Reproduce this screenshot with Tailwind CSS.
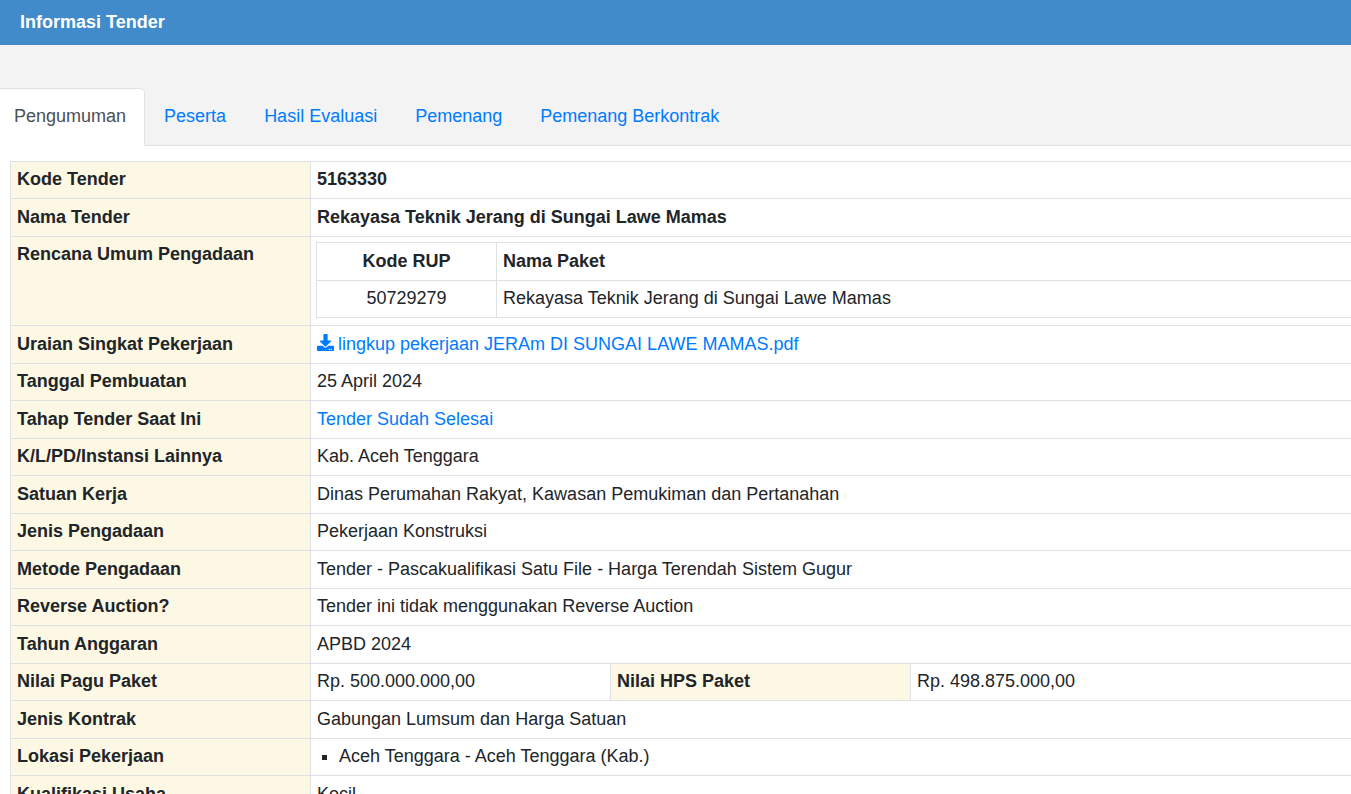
<!DOCTYPE html>
<html lang="id">
<head>
<meta charset="utf-8">
<title>Informasi Tender</title>
<meta name="viewport" content="width=device-width, initial-scale=1">
<script src="https://cdn.jsdelivr.net/npm/@tailwindcss/browser@4"></script>
</head>
<body class="min-h-screen bg-white font-['Liberation_Sans',Arial,sans-serif] text-[18px] leading-[26px] text-[#212529]">
<header class="flex h-[45px] items-center bg-[#428bca] px-5 pb-[2px]">
  <h1 class="font-bold text-white">Informasi Tender</h1>
</header>
<nav class="border-b border-[#dee2e6] bg-[#f3f3f3] pt-[43px]">
  <ul class="-mb-px flex text-[#007bff]">
    <li><a href="#pengumuman" aria-current="page" class="block rounded-tr-[5px] border border-l-0 border-[#dee2e6] border-b-white bg-white pt-[14px] pr-[18px] pb-4 pl-[14px] text-[#495057]">Pengumuman</a></li>
    <li><a href="#peserta" class="block border border-transparent px-[18px] pt-[14px] pb-4">Peserta</a></li>
    <li><a href="#evaluasi" class="block border border-transparent px-[18px] pt-[14px] pb-4">Hasil Evaluasi</a></li>
    <li><a href="#pemenang" class="block border border-transparent px-[18px] pt-[14px] pb-4">Pemenang</a></li>
    <li><a href="#berkontrak" class="block border border-transparent px-[18px] pt-[14px] pb-4">Pemenang Berkontrak</a></li>
  </ul>
</nav>
<main id="pengumuman" class="overflow-hidden pt-[15px] pl-[10px]">
  <table class="w-[calc(100%+10px)] table-fixed border-collapse text-left [&_td]:border [&_td]:border-[#dee2e6] [&_td]:px-[6px] [&_td]:pb-[2px] [&_th]:border [&_th]:border-[#dee2e6] [&_th]:px-[6px] [&_th]:pb-[2px] [&_tr]:odd:h-[37px] [&_tr]:even:h-[38px]">
    <colgroup><col class="w-[300px]"><col class="w-[300px]"><col class="w-[300px]"><col></colgroup>
    <tbody>
      <tr><th scope="row" class="bg-[#fcf8e3]">Kode Tender</th><td colspan="3" class="font-bold">5163330</td></tr>
      <tr><th scope="row" class="bg-[#fcf8e3]">Nama Tender</th><td colspan="3" class="font-bold">Rekayasa Teknik Jerang di Sungai Lawe Mamas</td></tr>
      <tr>
        <th scope="row" class="bg-[#fcf8e3] pt-1 align-top">Rencana Umum Pengadaan</th>
        <td colspan="3" class="px-[5px]! pt-[5px]! pb-[7px]!">
          <table class="w-full table-fixed border-collapse">
            <colgroup><col class="w-[180px]"><col></colgroup>
            <thead><tr class="h-[38px]!"><th scope="col" class="text-center">Kode RUP</th><th scope="col">Nama Paket</th></tr></thead>
            <tbody><tr><td class="text-center">50729279</td><td>Rekayasa Teknik Jerang di Sungai Lawe Mamas</td></tr></tbody>
          </table>
        </td>
      </tr>
      <tr><th scope="row" class="bg-[#fcf8e3]">Uraian Singkat Pekerjaan</th><td colspan="3"><a href="#unduh" class="flex items-center gap-1 text-[#007bff]"><svg class="mb-[2px] size-[17px]" viewBox="0 0 512 512" fill="#007bff" aria-hidden="true"><path d="M216 0h80c13.3 0 24 10.700 24 24v168h87.700c17.800 0 26.700 21.500 14.100 34.100L269.700 378.300c-7.500 7.500-19.800 7.500-27.300 0L90.100 226.100c-12.600-12.600-3.700-34.100 14.100-34.100H192V24c0-13.300 10.700-24 24-24zm296 376v112c0 13.300-10.700 24-24 24H24c-13.300 0-24-10.700-24-24V376c0-13.300 10.700-24 24-24h146.700l49 49c20.100 20.100 52.500 20.100 72.600 0l49-49H488c13.300 0 24 10.700 24 24zm-124 88c0-11-9-20-20-20s-20 9-20 20 9 20 20 20 20-9 20-20zm64 0c0-11-9-20-20-20s-20 9-20 20 9 20 20 20 20-9 20-20z"/></svg>lingkup pekerjaan JERAm DI SUNGAI LAWE MAMAS.pdf</a></td></tr>
      <tr><th scope="row" class="bg-[#fcf8e3]">Tanggal Pembuatan</th><td colspan="3">25 April 2024</td></tr>
      <tr><th scope="row" class="bg-[#fcf8e3]">Tahap Tender Saat Ini</th><td colspan="3"><a href="#tahap" class="text-[#007bff]">Tender Sudah Selesai</a></td></tr>
      <tr><th scope="row" class="bg-[#fcf8e3]">K/L/PD/Instansi Lainnya</th><td colspan="3">Kab. Aceh Tenggara</td></tr>
      <tr><th scope="row" class="bg-[#fcf8e3]">Satuan Kerja</th><td colspan="3">Dinas Perumahan Rakyat, Kawasan Pemukiman dan Pertanahan</td></tr>
      <tr><th scope="row" class="bg-[#fcf8e3]">Jenis Pengadaan</th><td colspan="3">Pekerjaan Konstruksi</td></tr>
      <tr><th scope="row" class="bg-[#fcf8e3]">Metode Pengadaan</th><td colspan="3">Tender - Pascakualifikasi Satu File - Harga Terendah Sistem Gugur</td></tr>
      <tr><th scope="row" class="bg-[#fcf8e3]">Reverse Auction?</th><td colspan="3">Tender ini tidak menggunakan Reverse Auction</td></tr>
      <tr><th scope="row" class="bg-[#fcf8e3]">Tahun Anggaran</th><td colspan="3">APBD 2024</td></tr>
      <tr><th scope="row" class="bg-[#fcf8e3]">Nilai Pagu Paket</th><td>Rp. 500.000.000,00</td><th scope="row" class="bg-[#fcf8e3]">Nilai HPS Paket</th><td>Rp. 498.875.000,00</td></tr>
      <tr><th scope="row" class="bg-[#fcf8e3]">Jenis Kontrak</th><td colspan="3">Gabungan Lumsum dan Harga Satuan</td></tr>
      <tr><th scope="row" class="bg-[#fcf8e3]">Lokasi Pekerjaan</th><td colspan="3"><ul class="list-[square] pl-[22px]"><li>Aceh Tenggara - Aceh Tenggara (Kab.)</li></ul></td></tr>
      <tr><th scope="row" class="bg-[#fcf8e3]">Kualifikasi Usaha</th><td colspan="3">Kecil</td></tr>
    </tbody>
  </table>
</main>
</body>
</html>
